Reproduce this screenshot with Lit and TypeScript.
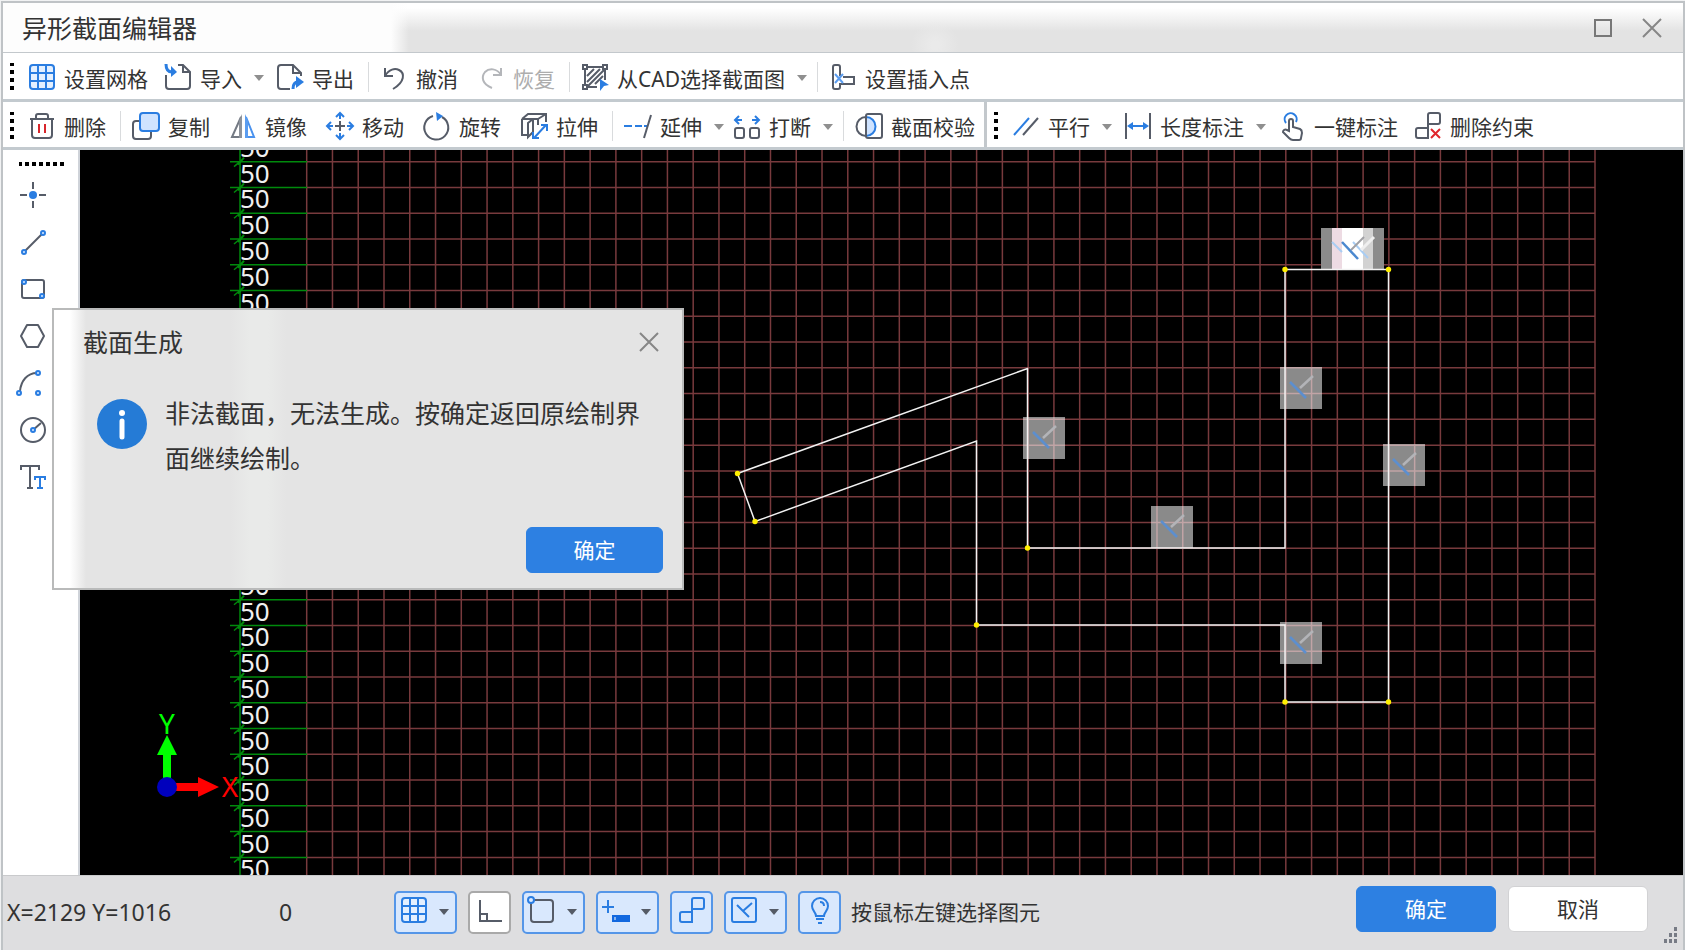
import { LitElement, html, css, svg, nothing } from "lit";
import { customElement, property } from "lit/decorators.js";

const INK = "#565c68";
const BLUE = "#2a7de1";

const glyphs: Record<string, unknown> = {
  grid: svg`<rect x="2" y="2" width="24" height="24" rx="3" fill="#e4f0ff" stroke=${BLUE} stroke-width="2"/><path d="M10 2v24M18 2v24M2 10h24M2 18h24" stroke=${BLUE} stroke-width="2"/>`,
  import: svg`<path d="M2 12v11a3 3 0 0 0 3 3h18a3 3 0 0 0 3-3V9l-7-7h-5M19 2v7h7" fill="none" stroke=${INK} stroke-width="2"/><path d="M2 1c0 5 2 8 6 8" fill="none" stroke=${BLUE} stroke-width="3"/><path d="M7 3l6 6-6 5z" fill=${BLUE}/>`,
  export: svg`<path d="M14 26H5a3 3 0 0 1-3-3V5a3 3 0 0 1 3-3h12l8 8v3M17 2v8h8" fill="none" stroke=${INK} stroke-width="2"/><path d="M17 26c0-5 2-7 5-7" fill="none" stroke=${BLUE} stroke-width="3"/><path d="M20 13l8 6-8 6z" fill=${BLUE}/>`,
  undo: svg`<path d="M5 5v8h8M5 13C9 6 15 5 19 7c6 3 6 12-6 19" fill="none" stroke=${INK} stroke-width="2"/>`,
  redo: svg`<path d="M24 5v7h-8M24 12C20 5 12 5 8 9c-4 5-3 12 7 16" fill="none" stroke="#b4b6ba" stroke-width="2"/>`,
  cad: svg`<path d="M4 5v18M5 4h18M24 5v12M5 24h11" stroke=${INK} stroke-width="2"/><path d="M6 13l7-7M6 19L19 6M7 23L23 7M14 21l8-8" stroke=${INK} stroke-width="2"/><g fill="#fff" stroke=${INK} stroke-width="2"><rect x="2" y="2" width="4" height="4"/><rect x="22" y="2" width="4" height="4"/><rect x="2" y="22" width="4" height="4"/></g><path d="M19 16l9 6-5 1-4 5z" fill=${BLUE}/>`,
  insert: svg`<path d="M11 13V4a2 2 0 0 0-2-2H6a2 2 0 0 0-2 2v20a2 2 0 0 0 2 2h3a2 2 0 0 0 2-2v-3h14v-7H14" fill="none" stroke=${INK} stroke-width="2"/><path d="M6 11l8 9M14 11l-8 9" stroke="#5b9df0" stroke-width="2"/>`,
  trash: svg`<path d="M2 7h24M8 7V4a2 2 0 0 1 2-2h8a2 2 0 0 1 2 2v3M4 7v16a3 3 0 0 0 3 3h14a3 3 0 0 0 3-3V7" fill="none" stroke=${INK} stroke-width="2"/><path d="M11 12v9M17 12v9" stroke="#d8262c" stroke-width="2"/>`,
  copy: svg`<rect x="1" y="9" width="18" height="18" rx="3" fill="none" stroke=${INK} stroke-width="2"/><rect x="8" y="1" width="19" height="18" rx="3" fill="#cfe3ff" stroke=${BLUE} stroke-width="2"/>`,
  mirror: svg`<path d="M12 5v20H3z" fill="none" stroke="#747a84" stroke-width="2"/><path d="M13 2v24H10V9z" fill="#8d939c"/><path d="M17 5v20h8z" fill="none" stroke="#4a92ee" stroke-width="2"/><path d="M16 2v24h3V9z" fill="#5b9df0"/>`,
  move: svg`<path d="M14 9v10M9 14h10" stroke=${INK} stroke-width="2"/><g fill="none" stroke=${BLUE} stroke-width="2"><path d="M14 2v5M14 21v5M2 14h5M21 14h5M10 5l4-4 4 4M10 23l4 4 4-4M5 10l-4 4 4 4M23 10l4 4-4 4"/></g>`,
  rotate: svg`<path d="M19 5a12 12 0 1 1-9-1" fill="none" stroke=${INK} stroke-width="2"/><path d="M13 0l7 4-6 5z" fill=${BLUE}/>`,
  stretch: svg`<path d="M2 7h16v6M2 7v16h5M2 7l6-5h18v8M18 7l8-5M13 7v13l-5 5V11l5-4" fill="none" stroke=${INK} stroke-width="2"/><path d="M14 26L26 13M13 20v6h6M21 13h6v6" fill="none" stroke=${BLUE} stroke-width="2"/>`,
  extend: svg`<path d="M0 14h8M11 14h7M20 14h3" stroke=${BLUE} stroke-width="2"/><path d="M27 3l-7 23" stroke=${INK} stroke-width="2"/>`,
  break: svg`<g fill="none" stroke=${INK} stroke-width="2"><rect x="2" y="16" width="9" height="10" rx="2"/><rect x="17" y="16" width="9" height="10" rx="2"/></g><path d="M2 8h7M6 4L2 8l4 4M19 8h7M22 4l4 4-4 4" fill="none" stroke=${BLUE} stroke-width="2"/>`,
  check: svg`<path d="M11 5V4a2 2 0 0 1 2-2h12a2 2 0 0 1 2 2v20a2 2 0 0 1-2 2H13a2 2 0 0 1-2-2z" fill="none" stroke=${INK} stroke-width="2"/><path d="M11 5a9.500 9.500 0 0 1 0 19z" fill="#cfe3ff" stroke=${BLUE} stroke-width="2"/><path d="M11 5a9.500 9.500 0 0 0 0 19z" fill="none" stroke=${INK} stroke-width="2"/>`,
  parallel: svg`<path d="M2 23L17 6" stroke=${BLUE} stroke-width="2"/><path d="M11 23L26 6" stroke=${INK} stroke-width="2"/>`,
  length: svg`<path d="M2 1v26M26 1v26" stroke=${INK} stroke-width="2"/><path d="M5 14h18" stroke=${BLUE} stroke-width="2"/><path d="M3 14l6-4v8zM25 14l-6-4v8z" fill=${BLUE}/>`,
  touch: svg`<path d="M8 11a6 6 0 1 1 10-1" fill="none" stroke=${BLUE} stroke-width="2"/><path d="M11 19V9a2 2 0 0 1 4 0v6l7 2c2 1 2 2 2 4l-1 5c0 1-1 2-2 2h-6c-2 0-3-1-4-2l-6-6c0-2 2-3 4-2z" fill="#fff" stroke=${INK} stroke-width="2"/>`,
  unlink: svg`<path d="M14 26H4a2 2 0 0 1-2-2v-6a2 2 0 0 1 2-2h10zM14 16V3a2 2 0 0 1 2-2h8a2 2 0 0 1 2 2v7a2 2 0 0 1-2 2H14" fill="none" stroke=${INK} stroke-width="2"/><path d="M17 17l9 9M26 17l-9 9" stroke="#e0262c" stroke-width="2"/>`,
  point: svg`<path d="M14 1v7M14 20v7M1 14h7M20 14h7" stroke=${INK} stroke-width="2"/><circle cx="14" cy="14" r="4" fill=${BLUE}/>`,
  line: svg`<path d="M6 23L23 6" stroke=${INK} stroke-width="2"/><g fill="#dcebff" stroke=${BLUE} stroke-width="2"><circle cx="5" cy="24" r="2"/><circle cx="24" cy="5" r="2"/></g>`,
  rect: svg`<rect x="3" y="5" width="22" height="18" rx="2" fill="none" stroke=${INK} stroke-width="2"/><g fill="#dcebff" stroke=${BLUE} stroke-width="2"><circle cx="5" cy="7" r="2"/><circle cx="23" cy="21" r="2"/></g>`,
  hex: svg`<path d="M8 3h11l6 11-6 11H8L2 14z" fill="none" stroke=${INK} stroke-width="2" stroke-linejoin="round"/>`,
  arc: svg`<path d="M1 22C2 12 8 4 18 4" fill="none" stroke=${INK} stroke-width="2"/><g fill="#dcebff" stroke=${BLUE} stroke-width="2"><circle cx="0" cy="24" r="2"/><circle cx="19" cy="4" r="2"/><circle cx="19" cy="24" r="2"/></g>`,
  circle: svg`<circle cx="14" cy="14" r="12" fill="none" stroke=${INK} stroke-width="2"/><path d="M14 14l8-7" stroke=${INK} stroke-width="2"/><circle cx="14" cy="14" r="2" fill="#dcebff" stroke=${BLUE} stroke-width="2"/>`,
  text: svg`<path d="M2 7V3h18v4M11 3v22M8 25h6" fill="none" stroke=${INK} stroke-width="2"/><path d="M16 17v-3h10v3M21 14v11M18 25h6" fill="none" stroke=${BLUE} stroke-width="2"/>`,
  ortho: svg`<path d="M4 4v21h22M4 18h7v7" fill="none" stroke=${INK} stroke-width="2"/>`,
  snap: svg`<rect x="3" y="4" width="22" height="22" rx="3" fill="none" stroke=${INK} stroke-width="2"/><circle cx="3" cy="4" r="3" fill="#dcebff" stroke=${BLUE} stroke-width="2"/>`,
  dynamic: svg`<path d="M6 4v13M0 11h12" stroke=${BLUE} stroke-width="2"/><rect x="10" y="19" width="18" height="7" fill="#1268df"/><path d="M13 21v3" stroke="#fff"/>`,
  link: svg`<path d="M14 26H4a2 2 0 0 1-2-2v-6a2 2 0 0 1 2-2h10zM14 16V4a2 2 0 0 1 2-2h8a2 2 0 0 1 2 2v7a2 2 0 0 1-2 2H14" fill="none" stroke=${BLUE} stroke-width="2"/>`,
  perp: svg`<rect x="2" y="2" width="24" height="24" rx="2" fill="none" stroke=${BLUE} stroke-width="2"/><path d="M7 9l12 12M22 7l-9 8" stroke=${BLUE} stroke-width="2"/>`,
  bulb: svg`<path d="M10 20c0-4-4-5-4-10a8 8 0 0 1 16 0c0 5-4 6-4 10zM10 23h8M12 27h4M14 6c3 0 4 2 4 4" fill="none" stroke=${BLUE} stroke-width="2"/>`,
  max: svg`<rect x="6" y="6" width="16" height="16" fill="none" stroke="#777" stroke-width="2"/>`,
  close: svg`<path d="M5 5l18 18M23 5L5 23" stroke="#868686" stroke-width="2"/>`,
};

const icon = (name: string) =>
  html`<svg class="icon" width="28" height="28" viewBox="0 0 28 28" aria-hidden="true">${glyphs[name]}</svg>`;

const shared = css`
  * { box-sizing: border-box; }
  button {
    font: inherit; color: inherit; background: none; border: 0; padding: 0; margin: 0;
    cursor: pointer; white-space: nowrap;
  }
  svg { display: block; flex: none; }
  .icon { overflow: visible; }
  .caret {
    display: block; width: 0; height: 0;
    border: 5px solid transparent; border-top: 6px solid #8f8f8f; border-bottom: 0;
  }
`;

interface Tool { icon: string; label: string; menu?: boolean; disabled?: boolean; }
interface Group { gap: "s" | "m" | "l"; tools: Tool[]; }

@customElement("tool-bar")
class ToolBar extends LitElement {
  @property({ attribute: false }) groups: Group[] = [];

  static styles = [shared, css`
    :host { display: flex; align-items: center; min-width: 0; padding-top: 2px; font-size: 21px; line-height: 28px; }
    .handle { width: 4px; height: 28px; margin: 0 14px 0 7px; flex: none; }
    .group { display: flex; align-items: center; }
    .s { gap: 13px; }
    .m { gap: 16px; }
    .l { gap: 19px; }
    .group + .sep { margin: 0 11px 0 14px; }
    .sep { width: 1px; height: 30px; background: #d9dbdd; flex: none; }
    .item { display: flex; align-items: center; gap: 12px; }
    .tool { display: flex; align-items: center; gap: 8px; color: #333; }
    .tool:disabled { color: #adadad; cursor: default; }
    .label { padding-top: 3px; }
    .drop { margin-right: -4px; padding-top: 2px; }
  `];

  render() {
    return html`
      <svg class="handle" viewBox="0 0 4 28" aria-hidden="true">
        <path d="M0 1h4M0 9h4M0 17h4M0 25h4" stroke="#000" stroke-width="4"/>
      </svg>
      ${this.groups.map((g, i) => html`
        ${i ? html`<span class="sep"></span>` : nothing}
        <div class="group ${g.gap}">
          ${g.tools.map((t) => html`
            <div class="item">
              <button class="tool" ?disabled=${t.disabled}>${icon(t.icon)}<span class="label">${t.label}</span></button>
              ${t.menu ? html`<button class="drop" aria-label=${t.label}><span class="caret"></span></button>` : nothing}
            </div>`)}
        </div>`)}
    `;
  }
}

const STEP = 25.766;
const range = (n: number) => Array.from({ length: n }, (_, i) => i);
const OUTLINE: [number, number, boolean][] = [
  [1285, 269.5, true], [1388.5, 269.5, true], [1388.5, 702, true], [1285, 702, true], [1285, 625, false],
  [976.5, 625, true], [976.5, 441, false], [755, 521.5, true], [737.5, 473.5, true], [1027.5, 368.5, false],
  [1027.5, 548, true], [1285, 548, false],
];
const MARKS = [[1280, 367], [1383, 444], [1023, 417], [1151, 506], [1280, 622]];

@customElement("section-canvas")
class SectionCanvas extends LitElement {
  static styles = css`
    :host { display: block; background: #000; overflow: hidden; min-width: 0; min-height: 0; contain: strict; }
    svg { display: block; width: 100%; height: 100%; }
    .dim { font: 26px "Noto Sans", "Open Sans", sans-serif; fill: #f0f0f0; }
    .axis { font: 28px "Noto Sans", "Open Sans", sans-serif; text-anchor: middle; }
  `;

  render() {
    const rows = range(29).map((i) => 161.700 + (i - 1) * STEP);
    return html`<svg role="img" aria-label="截面">
      <g transform="translate(-80 -150)">
        <g stroke="#783a3d" stroke-width="1.500">
          ${range(51).map((i) => svg`<path d="M${306.700 + i * STEP} 150V1400"/>`)}
          ${range(50).map((i) => svg`<path d="M307 ${161.700 + i * STEP}H1595"/>`)}
        </g>
        <path d="M240 150V1400" stroke="#008a0c" stroke-width="1.500"/>
        ${rows.map((y) => svg`
          <path d="M230 ${y}H307M234 ${y + 5}L240 ${y}" stroke="#008a0c" stroke-width="1.500"/>
          <path d="M238 ${y + 3}L244 ${y - 4}" stroke="#008a0c" stroke-width="2"/>
          <text class="dim" x="240" y=${y + 21}>50</text>`)}
        <path d="M163 779V755H157L167 735 177 755H171V779z" fill="#0f0"/>
        <path d="M175 783H198V777L219 787 198 797V791H175z" fill="#f00"/>
        <circle cx="167" cy="787" r="10" fill="#0000bd"/>
        <text class="axis" x="167" y="734" fill="#0f0">Y</text>
        <text class="axis" x="230" y="797" fill="#f00">X</text>
        <g fill="none" stroke-width="2.500">
          ${MARKS.map(([x, y]) => svg`<g transform="translate(${x} ${y})">
            <rect width="42" height="42" fill="#fff" fill-opacity=".54" stroke="none"/>
            <path d="M20 21L33 9" stroke="#b3b4b8"/><path d="M10 15l16 16" stroke="#5c8fcf"/></g>`)}
        </g>
        <g>
          <rect x="1321" y="228" width="63" height="42" fill="#8b8b8b"/>
          <rect x="1332" y="228" width="41" height="42" fill="#d2d2d2"/>
          <rect x="1332" y="228" width="10" height="42" fill="#eddbe3"/>
          <rect x="1342" y="228" width="21" height="42" fill="#fff"/>
          <path d="M1332 242l10 10M1353 242l15 16" stroke="#a9cdf3" stroke-width="2"/>
          <path d="M1361 250l13-13" stroke="#efefef" stroke-width="3"/>
          <path d="M1351 250l13-13" stroke="#a0a0a4" stroke-width="2"/>
          <path d="M1342 242l16 17" stroke="#4b88cf" stroke-width="2.500"/>
        </g>
        <polygon points=${OUTLINE.map(([x, y]) => `${x},${y}`).join(" ")} fill="none" stroke="#f2f2f2" stroke-width="1.500"/>
        ${OUTLINE.filter((p) => p[2]).map(([x, y]) => svg`<circle cx=${x} cy=${y} r="2.700" fill="#ffef00"/>`)}
      </g>
    </svg>`;
  }
}

@customElement("app-root")
class AppRoot extends LitElement {
  static styles = [shared, css`
    :host {
      display: block; height: 100vh; padding: 1px 0 0 1px; background: #f1f2f3; color: #333; overflow: hidden;
      font-family: "Noto Sans", "Noto Sans CJK SC", sans-serif; font-size: 21px; line-height: 28px;
    }
    .window {
      position: relative; height: 100%; display: grid; grid-template-rows: 50px 49px 48px minmax(0, 1fr) 75px;
      border: 2px solid #bfc3c6; border-bottom-width: 1px; background: #fff;
    }
    .title {
      display: flex; align-items: center; justify-content: space-between; padding: 0 17px 0 19px;
      border-bottom: 1px solid #c3c8cc;
      background:
        linear-gradient(to right, #fdfdfd 388px, #fdfdfd00 406px),
        radial-gradient(circle at 932px 42px, #eaeaea 4px, #eaeaea00 24px),
        linear-gradient(to bottom, #fff 5px, #e3e3e3 28px);
    }
    h1, h2 { margin: 0; font-size: 25px; font-weight: 400; line-height: 32px; }
    .controls { display: flex; gap: 21px; }
    .row { display: flex; border-bottom: 3px solid #c3cacf; }
    .split { border-right: 3px solid #c3c8cc; padding-right: 9px; }
    .main { display: grid; grid-template-columns: 77px minmax(0, 1fr); min-height: 0; }
    .rail {
      display: flex; flex-direction: column; padding: 12px 0 0 16px; border-right: 2px solid #cfd3d9; min-height: 0;
    }
    .rail button { display: flex; align-items: center; width: 28px; height: 47px; }
    .dots { margin-bottom: 5px; }
    .status {
      display: flex; align-items: center; position: relative; padding: 0 35px 2px 4px;
      background: #dedee0; border-top: 1px solid #c9cacc;
    }
    .coords, .angle { font-size: 23px; }
    .coords { width: 272px; }
    .angle { width: 115px; }
    .toggles { display: flex; gap: 11px; margin-right: 10px; }
    .toggle {
      display: flex; align-items: center; justify-content: center; width: 43px; height: 43px;
      border: 2px solid #5596e8; border-radius: 5px; background: #d9e8fd;
    }
    .toggle .icon { margin-bottom: 4px; }
    .toggle.menu { width: 63px; justify-content: space-between; padding: 0 6px 0 4px; }
    .toggle.off { background: #fff; border-color: #a9a9a9; }
    .toggle .caret { border-top-color: #555b66; }
    .hint { flex: 1; }
    .actions { display: flex; gap: 12px; padding-bottom: 6px; }
    .btn { width: 140px; height: 46px; border-radius: 6px; background: #fff; border: 1px solid #d2d2d4; }
    .btn.primary { background: #2d80e2; border-color: #2d80e2; color: #fff; }
    .grip { position: absolute; right: 5px; bottom: 7px; }
    dialog {
      position: absolute; left: 49px; top: 305px; margin: 0; width: 632px; padding: 13px 19px 15px 29px;
      border: 2px solid #b9baba; color: #333;
      background: linear-gradient(to right, #fff 16px, #e4e4e4 32px 176px, #e9eae9 196px 214px, #e4e4e4 232px);
      display: flex; flex-direction: column;
    }
    .head { display: flex; justify-content: space-between; align-items: center; height: 38px; }
    .body { display: flex; gap: 18px; margin: 30px 16px 0 14px; font-size: 25px; line-height: 45px; }
    .info { margin-top: 8px; }
    .body p { margin: 0; flex: 1; }
    dialog .btn { width: 137px; align-self: flex-end; margin-top: 46px; }
  `];

  private top: Group[] = [
    { gap: "m", tools: [{ icon: "grid", label: "设置网格" }, { icon: "import", label: "导入", menu: true }, { icon: "export", label: "导出" }] },
    { gap: "l", tools: [{ icon: "undo", label: "撤消" }, { icon: "redo", label: "恢复", disabled: true }] },
    { gap: "l", tools: [{ icon: "cad", label: "从CAD选择截面图", menu: true }] },
    { gap: "l", tools: [{ icon: "insert", label: "设置插入点" }] },
  ];
  private edit: Group[] = [
    { gap: "l", tools: [{ icon: "trash", label: "删除" }] },
    { gap: "l", tools: [
      { icon: "copy", label: "复制" }, { icon: "mirror", label: "镜像" }, { icon: "move", label: "移动" },
      { icon: "rotate", label: "旋转" }, { icon: "stretch", label: "拉伸" }] },
    { gap: "s", tools: [{ icon: "extend", label: "延伸", menu: true }, { icon: "break", label: "打断", menu: true }] },
    { gap: "l", tools: [{ icon: "check", label: "截面校验" }] },
  ];
  private constrain: Group[] = [
    { gap: "m", tools: [
      { icon: "parallel", label: "平行", menu: true }, { icon: "length", label: "长度标注", menu: true },
      { icon: "touch", label: "一键标注" }, { icon: "unlink", label: "删除约束" }] },
  ];
  private rail = [["point", "点"], ["line", "直线"], ["rect", "矩形"], ["hex", "多边形"], ["arc", "弧"], ["circle", "圆"], ["text", "文字"]];
  private toggles: [string, string, boolean, boolean][] = [
    ["grid", "网格", true, true], ["ortho", "正交", false, false], ["snap", "捕捉", true, true],
    ["dynamic", "动态输入", true, true], ["link", "约束", false, true], ["perp", "垂直", true, true], ["bulb", "提示", false, true],
  ];

  render() {
    return html`
      <div class="window">
        <header class="title">
          <h1>异形截面编辑器</h1>
          <div class="controls">
            <button aria-label="最大化">${icon("max")}</button>
            <button aria-label="关闭">${icon("close")}</button>
          </div>
        </header>
        <div class="row"><tool-bar .groups=${this.top}></tool-bar></div>
        <div class="row">
          <tool-bar class="split" .groups=${this.edit}></tool-bar>
          <tool-bar .groups=${this.constrain}></tool-bar>
        </div>
        <main class="main">
          <nav class="rail">
            <svg class="dots" width="46" height="4" viewBox="0 0 46 4" aria-hidden="true">
              <path d="M-2 2h48" stroke="#000" stroke-width="4" stroke-dasharray="4 3" stroke-dashoffset="-1"/>
            </svg>
            ${this.rail.map(([n, l]) => html`<button aria-label=${l}>${icon(n)}</button>`)}
          </nav>
          <section-canvas></section-canvas>
        </main>
        <footer class="status">
          <span class="coords">X=2129 Y=1016</span>
          <span class="angle">0</span>
          <div class="toggles">
            ${this.toggles.map(([n, l, menu, on]) => html`
              <button class="toggle ${menu ? "menu" : ""} ${on ? "" : "off"}" aria-label=${l} aria-pressed=${on}>
                ${icon(n)}${menu ? html`<span class="caret"></span>` : nothing}
              </button>`)}
          </div>
          <span class="hint">按鼠标左键选择图元</span>
          <div class="actions">
            <button class="btn primary">确定</button>
            <button class="btn">取消</button>
          </div>
          <svg class="grip" width="16" height="16" viewBox="0 0 16 16" aria-hidden="true">
            <path d="M12 2h3M7 8h3M12 8h3M2 14h3M7 14h3M12 14h3" stroke="#777b85" stroke-width="4"/>
          </svg>
        </footer>
        <dialog open aria-labelledby="dlg-title">
          <div class="head">
            <h2 id="dlg-title">截面生成</h2>
            <button aria-label="关闭">${icon("close")}</button>
          </div>
          <div class="body">
            <svg class="info" width="50" height="50" viewBox="0 0 50 50" aria-hidden="true">
              <circle cx="25" cy="25" r="25" fill="#257bd6"/>
              <circle cx="25" cy="14" r="3" fill="#fff"/>
              <path d="M25 22v16" stroke="#fff" stroke-width="5" stroke-linecap="round"/>
            </svg>
            <p>非法截面，无法生成。按确定返回原绘制界面继续绘制。</p>
          </div>
          <button class="btn primary">确定</button>
        </dialog>
      </div>
    `;
  }
}
